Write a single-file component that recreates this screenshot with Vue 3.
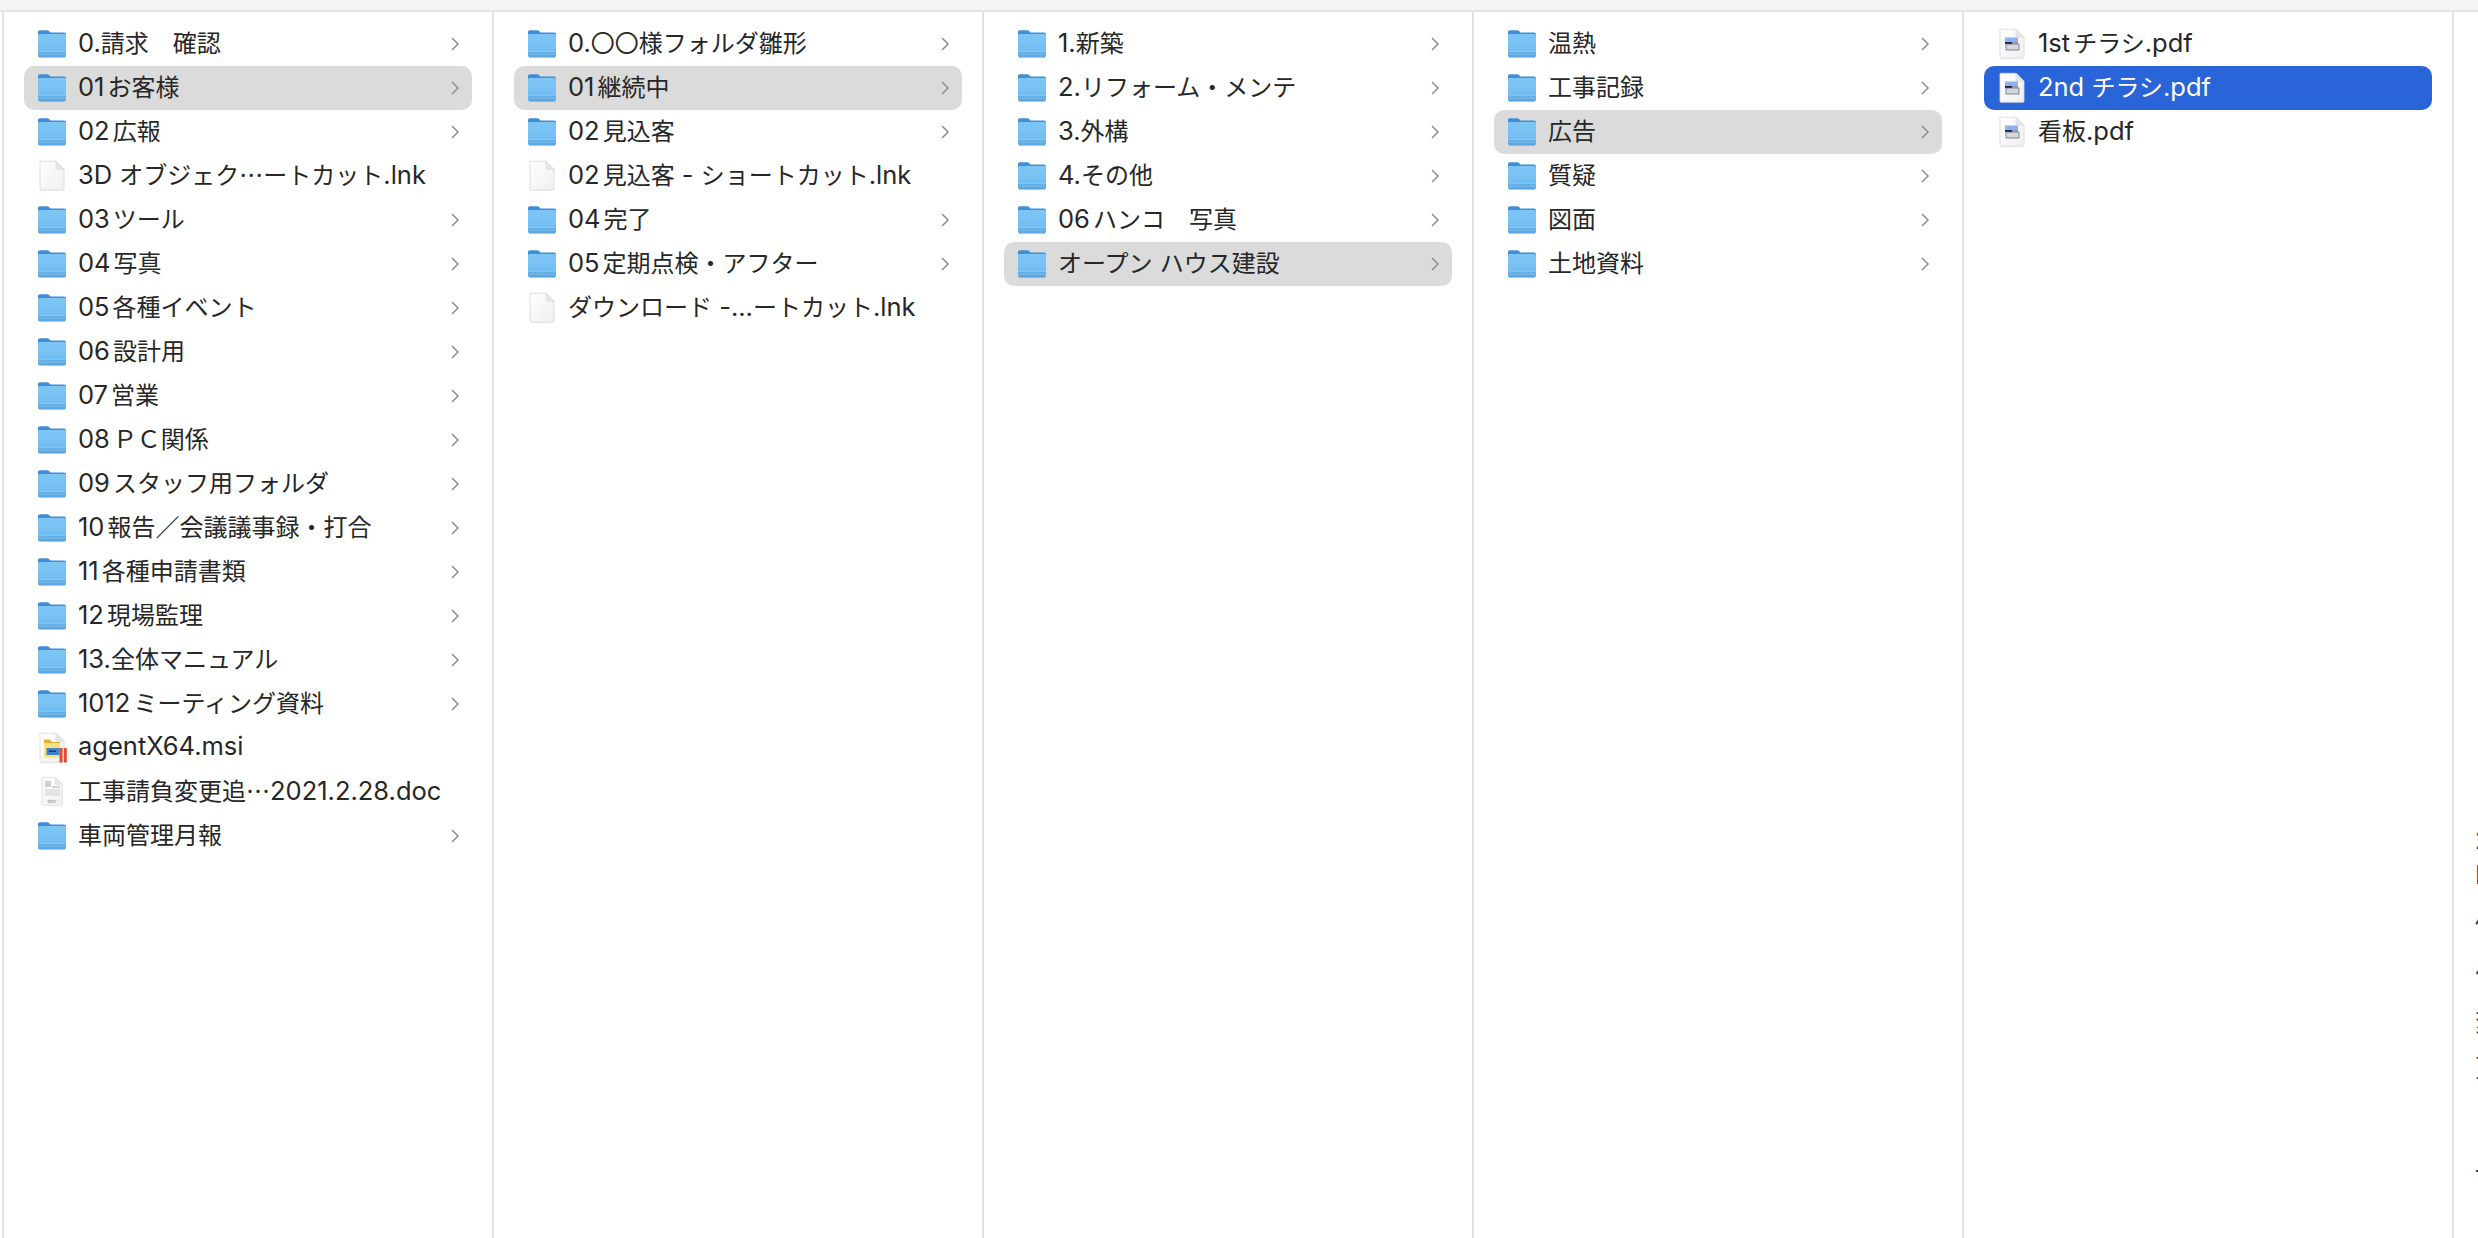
<script setup>
const columns = [
  [
    ['0.請求　確認', 'f'], ['01お客様', 'f', 'g'], ['02広報', 'f'], ['3D オブジェク…ートカット.lnk', 'l'],
    ['03ツール', 'f'], ['04写真', 'f'], ['05各種イベント', 'f'], ['06設計用', 'f'], ['07営業', 'f'],
    ['08ＰＣ関係', 'f'], ['09スタッフ用フォルダ', 'f'], ['10報告／会議議事録・打合', 'f'],
    ['11各種申請書類', 'f'], ['12現場監理', 'f'], ['13.全体マニュアル', 'f'], ['1012ミーティング資料', 'f'],
    ['agentX64.msi', 'm'], ['工事請負変更追…2021.2.28.doc', 'd'], ['車両管理月報', 'f']
  ],
  [
    ['0.〇〇様フォルダ雛形', 'f'], ['01継続中', 'f', 'g'], ['02見込客', 'f'], ['02見込客 - ショートカット.lnk', 'l'],
    ['04完了', 'f'], ['05定期点検・アフター', 'f'], ['ダウンロード -...ートカット.lnk', 'l']
  ],
  [
    ['1.新築', 'f'], ['2.リフォーム・メンテ', 'f'], ['3.外構', 'f'], ['4.その他', 'f'],
    ['06ハンコ　写真', 'f'], ['オープン ハウス建設', 'f', 'g']
  ],
  [
    ['温熱', 'f'], ['工事記録', 'f'], ['広告', 'f', 'g'], ['質疑', 'f'], ['図面', 'f'], ['土地資料', 'f']
  ],
  [
    ['1stチラシ.pdf', 'p'], ['2nd チラシ.pdf', 'p', 'b'], ['看板.pdf', 'p']
  ]
]

const CJK = /[\u3000-\u30ff\u3400-\u9fff\uff00-\uffef…]/

function runs(name) {
  const parts = name.match(/[\u3000-\u30ff\u3400-\u9fff\uff00-\uffef…]+|[^\u3000-\u30ff\u3400-\u9fff\uff00-\uffef…]+/g)
  return parts.map((text, i) => {
    const cjk = CJK.test(text[0])
    const prev = parts[i - 1]
    const tight = cjk && prev && /[0-9a-zA-Z]$/.test(prev)
    return { text, cjk, tight }
  })
}

const preview = [
  ['2', 0], ['I', -5], ['個', 10], ['作', 10], ['変', 7], ['更', 6], ['・', 20], ['一', 4]
]
</script>

<template>
  <div class="finder" lang="ja">
    <svg class="defs" width="0" height="0" aria-hidden="true">
      <defs>
        <linearGradient id="folderBody" x1="0" y1="0" x2="0" y2="1">
          <stop offset="0" stop-color="#7fc6f5" />
          <stop offset="1" stop-color="#6db9f0" />
        </linearGradient>
        <linearGradient id="sheet" x1="0" y1="0" x2="1" y2="1">
          <stop offset="0" stop-color="#ffffff" />
          <stop offset="1" stop-color="#efefef" />
        </linearGradient>
        <symbol id="folder" viewBox="0 0 36 36">
          <path d="M4 6C4 5 4.800 4.200 5.800 4.200h7.400c.9 0 1.500.3 2.100 1l1.300 1.400h13.500c1.100 0 1.900.8 1.900 1.900v3H4z" fill="#3f8fd8" />
          <path d="M4 9.800c0-1 .8-1.700 1.800-1.700h24.400c1 0 1.800.7 1.800 1.700v19.400c0 1.100-.8 1.800-1.900 1.800H5.900C4.800 31 4 30.300 4 29.200z" fill="url(#folderBody)" />
          <path d="M4 26h28v3.200c0 1-.8 1.800-1.900 1.800H5.900C4.800 31 4 30.200 4 29.200z" fill="#5ba7e2" />
          <path d="M4 25.800h28M4 28.200h28" stroke="#9bd2f6" stroke-width=".6" />
          <path d="M5 31.500h26" stroke="#80858c" stroke-opacity=".5" stroke-width="1" />
        </symbol>
        <symbol id="page" viewBox="0 0 36 36">
          <path d="M6 3.300h16l8 8v20c0 .6-.4 1-1 1H7c-.6 0-1-.4-1-1z" fill="url(#sheet)" stroke="#d8d8d8" stroke-width=".8" />
          <path d="M22 3.300v7c0 .6.400 1 1 1h7z" fill="#e6e6e6" stroke="#d8d8d8" stroke-width=".6" />
        </symbol>
        <symbol id="pagedoc" viewBox="0 0 36 36">
          <path d="M8 3.300h13.500l7 7v20c0 .6-.4 1-1 1H9c-.6 0-1-.4-1-1z" fill="url(#sheet)" stroke="#dcdcdc" stroke-width=".8" />
          <path d="M21.500 3.300v6c0 .6.400 1 1 1h6z" fill="#e8e8e8" stroke="#dcdcdc" stroke-width=".6" />
        </symbol>
      </defs>
    </svg>
    <div class="topbar"></div>
    <div class="columns">
      <section v-for="(col, c) in columns" :key="c" class="column">
        <div
          v-for="(row, r) in col"
          :key="r"
          class="row"
          :class="{ grey: row[2] === 'g', blue: row[2] === 'b' }"
        >
          <svg class="icon" viewBox="0 0 36 36">
            <use :href="row[1] === 'f' ? '#folder' : row[1] === 'd' ? '#pagedoc' : '#page'" />
            <g v-if="row[1] === 'p'">
              <rect x="11" y="11.500" width="13" height="5" fill="#8fb0ea" />
              <rect x="11" y="16" width="13" height="2" fill="#17265c" />
              <rect x="12" y="18" width="13" height="6" fill="#d4d8de" stroke="#5c6066" stroke-width=".7" />
              <path d="M18 17h6" stroke="#fff" stroke-width="1" />
            </g>
            <g v-if="row[1] === 'm'">
              <path d="M10 12v-1.500c0-.6.400-1 1-1h5l2 2.500h8v3H10z" fill="#e3ac3a" />
              <rect x="10" y="13" width="16" height="14.500" fill="#fbe07c" />
              <rect x="12.500" y="18" width="13" height="7" fill="#3f82c8" />
              <rect x="15" y="20.500" width="7" height="1.500" fill="#17396b" />
              <rect x="25.500" y="18" width="3" height="14.500" fill="#e4492f" />
              <rect x="29.800" y="18" width="3" height="14.500" fill="#e4492f" />
            </g>
            <g v-if="row[1] === 'd'">
              <rect x="11" y="7" width="6" height="6" fill="#cfcfcf" />
              <rect x="11" y="15" width="15" height="7" fill="#e4e4e4" />
              <rect x="18" y="12" width="8" height="2" fill="#d4d4d4" />
              <text x="18" y="29" class="doclabel" text-anchor="middle">doc</text>
            </g>
          </svg>
          <span class="name">
            <span
              v-for="(run, k) in runs(row[0])"
              :key="k"
              :class="{ cjk: run.cjk, tight: run.tight }"
            >{{ run.text }}</span>
          </span>
          <svg v-if="row[1] === 'f'" class="chev" viewBox="0 0 10 14">
            <path d="M2 1 8 7l-6 6" />
          </svg>
        </div>
      </section>
      <aside class="preview">
        <p
          v-for="(line, i) in preview"
          :key="i"
          class="pline"
          :style="{ marginTop: line[1] + 'px' }"
        >{{ line[0] }}</p>
      </aside>
    </div>
  </div>
</template>

<style>
html, body { margin: 0; background: #fff; }
</style>

<style scoped>
.finder {
  width: 2478px;
  height: 1238px;
  display: flex;
  flex-direction: column;
  overflow: hidden;
  background: #fff;
  font-family: Inter, "Noto Sans CJK JP", sans-serif;
  color: #272727;
}
.defs { position: absolute; }
.topbar {
  height: 10px;
  flex: none;
  background: #f6f5f3;
  border-bottom: 2px solid #e4e4e4;
}
.columns {
  flex: 1;
  display: flex;
  padding-left: 2px;
  min-height: 0;
}
.column {
  flex: none;
  box-sizing: content-box;
  width: 448px;
  padding: 10px 20px 0;
  border-right: 2px solid #e2e2e2;
}
.column:first-child { border-left: 2px solid #e2e2e2; }
.row {
  height: 44px;
  display: flex;
  align-items: center;
  border-radius: 10px;
  padding: 0 10px;
  font-size: 25.5px;
}
.row.grey { background: #dbdbdb; }
.row.blue { background: #2a64d9; color: #fff; }
.icon { width: 36px; height: 36px; flex: none; }
.doclabel { font-size: 5px; fill: #8a8a8a; font-family: Inter, sans-serif; }
.name {
  margin-left: 8px;
  padding-bottom: 5px;
  flex: 1;
  white-space: nowrap;
}
.cjk { font-size: 24px; font-family: "Noto Sans CJK JP", sans-serif; }
.tight { margin-left: 3px; }
.chev { width: 10px; height: 14px; flex: none; margin-right: 2px; }
.chev path { fill: none; stroke: #8f8f8f; stroke-width: 1.500; }
.preview {
  flex: 1;
  min-width: 0;
  overflow: hidden;
  padding: 808px 0 0 21px;
  font-size: 25px;
  display: flex;
  flex-direction: column;
}
.pline {
  height: 40px;
  line-height: 40px;
  margin: 0;
  white-space: nowrap;
  color: #333;
}
</style>
